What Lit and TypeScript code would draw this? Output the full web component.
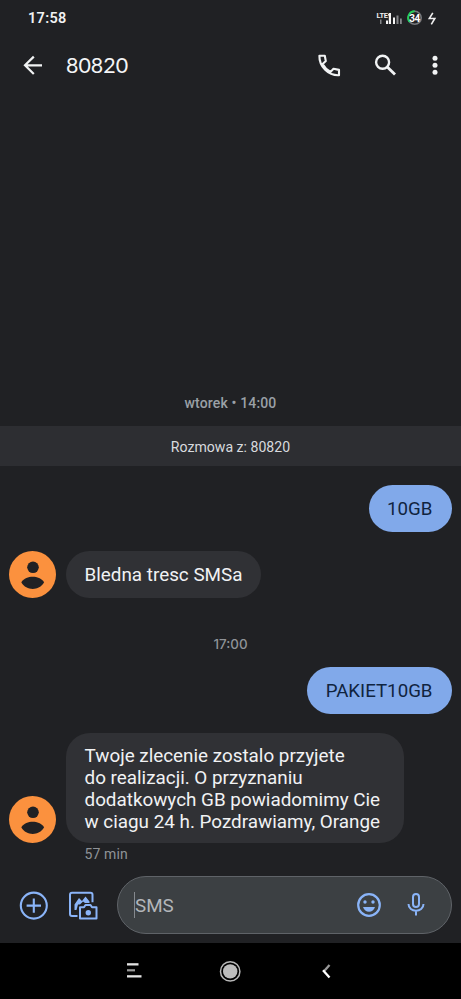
import { LitElement, html, css, nothing } from "lit";
import { customElement } from "lit/decorators.js";

@customElement("person-avatar")
class PersonAvatar extends LitElement {
  static styles = css`
    :host { display: block; width: 47px; height: 47px; flex: none; margin-right: 10px; }
    svg { display: block; }
  `;
  render() {
    return html`<svg width="47" height="47" viewBox="0 0 47 47">
      <circle cx="23.5" cy="23.5" r="23.5" fill="#fb913e" />
      <circle cx="24" cy="16.3" r="5.8" fill="#202124" />
      <path d="M12.3 31.3C15 27.3 19.3 25.8 23.7 25.8S32.400 27.300 35.100 31.300C32.400 36 28.200 38 23.700 38S15 36 12.300 31.300Z" fill="#202124" />
    </svg>`;
  }
}

@customElement("chat-message")
class ChatMessage extends LitElement {
  static properties = { lines: { attribute: false }, outgoing: { type: Boolean } };
  declare lines: string[];
  declare outgoing: boolean;
  static styles = css`
    :host { display: block; }
    .row { display: flex; align-items: flex-end; padding: 0 9.5px 0 9px; }
    .out { justify-content: flex-end; }
    .bubble { box-sizing: border-box; min-height: 47px; padding: 13px 19px 10px 18.5px; border-radius: 24px;
      background: #303135; color: #f1f2f4; font-size: 18.85px; line-height: 22.1px; white-space: nowrap; }
    .multi { padding: 12px 24px 10px 18.5px; }
    .multi div { height: 22.1px; }
    .out .bubble { background: #81a9ea; color: #10243f; font-size: 18.7px; }
  `;
  render() {
    return html`<div class="row ${this.outgoing ? "out" : ""}">
      ${this.outgoing ? nothing : html`<person-avatar></person-avatar>`}
      <div class="bubble ${this.lines.length > 1 ? "multi" : ""}">${this.lines.map((l) => html`<div>${l}</div>`)}</div>
    </div>`;
  }
}

@customElement("app-root")
class AppRoot extends LitElement {
  static styles = css`
    :host { display: flex; flex-direction: column; width: 461px; height: 999px; overflow: hidden;
      background: #202124; color: #e8eaed; font-family: Roboto, "Liberation Sans", sans-serif; }
    svg { display: block; flex: none; }
    .status { height: 36px; display: flex; align-items: center; padding: 0 24px 0 28px; box-sizing: border-box; }
    .clock { font-size: 14.5px; font-weight: 600; letter-spacing: 0.3px; color: #f1f2f3; flex: 1; }
    .bar { height: 58px; display: flex; align-items: center; padding: 0 14px 0 19px; }
    .title { font-family: Lato, sans-serif; font-size: 21.4px; margin-left: 19px; flex: 1; color: #f4f5f6; }
    .call { margin-right: 28px; }
    .search { margin-right: 24px; }
    .thread { flex: 1; display: flex; flex-direction: column; justify-content: flex-end; min-height: 0; }
    .day { text-align: center; font-size: 14px; font-weight: 500; line-height: 18px; color: #9aa0a6; margin-bottom: 14px; letter-spacing: 0.15px; }
    .banner { height: 40px; line-height: 42px; background: #2d2e32; text-align: center; font-size: 14.1px; color: #d8dade; margin-bottom: 19px; }
    .gap { height: 19px; }
    .time { text-align: center; font-family: Inter, sans-serif; font-size: 13.4px; font-weight: 500; line-height: 18px; color: #8f9398; margin: 37px 0 14px; }
    .age { font-size: 14px; line-height: 18px; color: #8f9398; padding-left: 84.5px; margin: 2px 0 13px; letter-spacing: 0.1px; }
    .compose { display: flex; align-items: center; height: 58px; padding: 0 9px 9px 19px; }
    .gallery { margin-left: 19px; }
    .field { flex: 1; box-sizing: border-box; height: 58px; margin-left: 19px; border: 1px solid #5f6368; border-radius: 29px;
      background: #3c4043; display: flex; align-items: center; padding: 0 26px 0 16px; }
    .caret { width: 1px; height: 26px; background: #85898e; }
    .hint { flex: 1; font-size: 18.8px; line-height: 22px; padding-top: 1px; color: #b3b6ba; }
    .smile { margin-right: 26px; }
    .nav { height: 56px; background: #000; display: flex; align-items: center; justify-content: center; gap: 72px; padding-right: 1px; box-sizing: border-box; }
  `;

  render() {
    const blue = "#8ab4f8";
    return html`
      <div class="status">
        <span class="clock">17:58</span>
        <svg width="62" height="20" viewBox="375 7 62 20">
          <text x="376.500" y="16.800" font-family="Roboto" font-size="7.500" font-weight="700" fill="#eee" textLength="11.500">LTE</text>
          <g fill="#f4f4f4"><rect x="386" y="19.500" width="2" height="3.500"/><path d="M388 13.500l1.200-1.500h1.800V23h-2.200V14.500H388z"/><rect x="393" y="16.500" width="2" height="6.500"/></g>
          <g fill="#85878a"><rect x="380" y="18.500" width="1.500" height="4.500"/><rect x="396.500" y="14.500" width="2" height="8.500"/><rect x="400" y="17.500" width="1.800" height="5.500"/></g>
          <circle cx="414.700" cy="16.800" r="6.500" fill="none" stroke="#77797c" stroke-width="1.600"/>
          <path d="M409.700 21A6.500 6.500 0 0 1 414.700 10.300" fill="none" stroke="#25cf57" stroke-width="1.900"/>
          <text x="414.500" y="20.500" text-anchor="middle" font-family="Roboto" font-size="10" font-weight="700" fill="#fff" letter-spacing="-.5">34</text>
          <path d="M432.800 11.800L429.300 17.500H434.800L431.300 23.300" fill="none" stroke="#eee" stroke-width="1.600"/>
        </svg>
      </div>
      <div class="bar">
        <svg width="28" height="28" viewBox="0 0 28 28" fill="none" stroke="#f1f3f4" stroke-width="2.200"><path d="M23 14.300H6.500M14.800 5.600L6 14.300l8.800 8.700"/></svg>
        <span class="title">80820</span>
        <svg class="call" width="28" height="28" viewBox="0 0 28 28" fill="none" stroke="#f1f3f4" stroke-width="2.100" stroke-linejoin="round"><path d="M4.400 4.700H9.800L10.800 10.100L7.600 13.100C9.300 16.400 12.200 19.200 15.600 20.900L18.500 17.700L24 18.900V24.200C13.500 24.700 4.100 15.600 4.400 4.700Z"/></svg>
        <svg class="search" width="28" height="28" viewBox="0 0 28 28" fill="none" stroke="#f1f3f4"><circle cx="11.600" cy="11.300" r="6.500" stroke-width="2.400"/><path d="M16.300 16L24 23.500" stroke-width="2.800"/></svg>
        <svg width="24" height="28" viewBox="0 0 24 28" fill="#f1f3f4"><circle cx="12" cy="7.300" r="2.500"/><circle cx="12" cy="14.300" r="2.500"/><circle cx="12" cy="21.300" r="2.500"/></svg>
      </div>
      <div class="thread">
        <div class="day">wtorek • 14:00</div>
        <div class="banner">Rozmowa z: 80820</div>
        <chat-message outgoing .lines=${["10GB"]}></chat-message>
        <div class="gap"></div>
        <chat-message .lines=${["Bledna tresc SMSa"]}></chat-message>
        <div class="time">17:00</div>
        <chat-message outgoing .lines=${["PAKIET10GB"]}></chat-message>
        <div class="gap"></div>
        <chat-message .lines=${["Twoje zlecenie zostalo przyjete", "do realizacji. O przyznaniu", "dodatkowych GB powiadomimy Cie", "w ciagu 24 h. Pozdrawiamy, Orange"]}></chat-message>
        <div class="age">57 min</div>
      </div>
      <div class="compose">
        <svg width="30" height="30" viewBox="0 0 30 30" fill="none" stroke=${blue} stroke-width="2.100"><circle cx="14.800" cy="15.600" r="13"/><path d="M14.800 8.400v14.400M7.600 15.600H22"/></svg>
        <svg class="gallery" width="30" height="30" viewBox="0 0 30 30" fill="none" stroke=${blue} stroke-width="2" stroke-linejoin="round">
          <path d="M9.500 26H4Q2 26 2 24V4.800Q2 2.800 4 2.800H22.500Q24.500 2.800 24.500 4.800V12.300"/>
          <path d="M6.500 20V14.500L11 8L14 11L17.500 6.500L21.500 11.500V13H17L15 11.500L12 14.500H10L8.500 20Z" fill=${blue} stroke="none"/>
          <path d="M13 17.300H16L17.500 15H22.500L24 17.300H28.500V28.500H12V17.300Z"/><circle cx="20.300" cy="22.700" r="2.700" fill=${blue} stroke="none"/>
        </svg>
        <div class="field">
          <span class="caret"></span><span class="hint">SMS</span>
          <svg class="smile" width="24" height="24" viewBox="0 0 24 24"><circle cx="12" cy="12" r="10.800" fill="none" stroke=${blue} stroke-width="2.200"/><circle cx="8" cy="9" r="1.700" fill=${blue}/><circle cx="16" cy="9" r="1.700" fill=${blue}/><path d="M6 14H18C17 17 14.800 18.700 12 18.700S7 17 6 14Z" fill=${blue}/></svg>
          <svg width="18" height="24" viewBox="0 0 18 24" fill="none" stroke=${blue} stroke-width="2"><rect x="6" y="1" width="6" height="13" rx="3"/><path d="M1.500 11C1.500 20 16.500 20 16.500 11M9 17.700V22.500"/></svg>
        </div>
      </div>
      <div class="nav">
        <svg width="24" height="24" viewBox="0 0 24 24" fill="#e4e4e4"><rect x="5" y="4.200" width="11.500" height="2.300"/><rect x="5" y="10.200" width="8" height="2.200" fill="#9a9a9a"/><rect x="5" y="16.200" width="14.500" height="2.300"/></svg>
        <svg width="24" height="24" viewBox="0 0 24 24"><circle cx="12.200" cy="12.400" r="9.700" fill="none" stroke="#b8b8b8" stroke-width="1.500"/><circle cx="12.200" cy="12.400" r="7.200" fill="#bdbdbd"/></svg>
        <svg width="24" height="24" viewBox="0 0 24 24" fill="none" stroke-width="2.300"><path d="M15.500 6L9.800 12.500" stroke="#999"/><path d="M9 11.200L15.500 18.500" stroke="#fff"/></svg>
      </div>
    `;
  }
}
